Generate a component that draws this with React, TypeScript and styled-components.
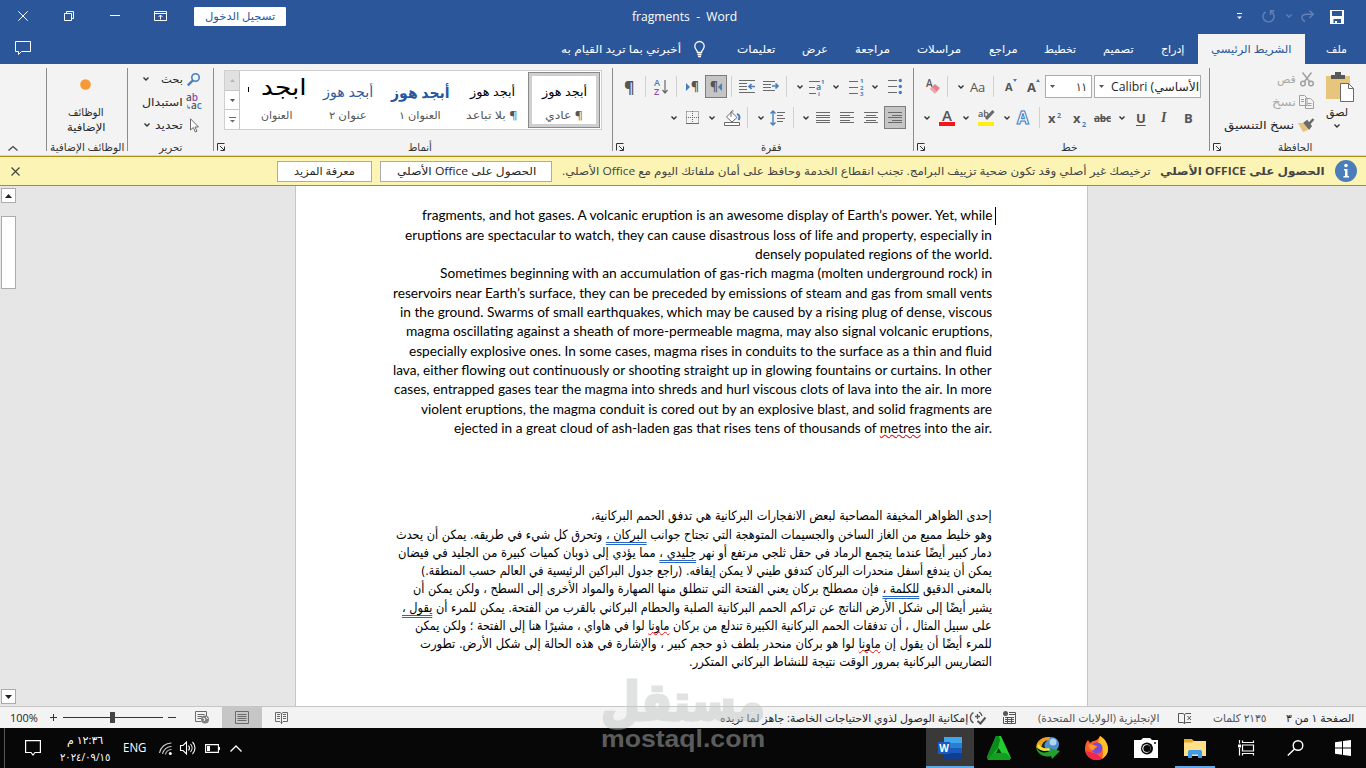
import {FC, ReactNode, useLayoutEffect, useRef, useState} from "react";
import styled, {createGlobalStyle, css} from "styled-components";

const UI = `"Open Sans", "DejaVu Sans", sans-serif`;
const BLUE = "#2b579a";
const GREY = "#6a6a6a";
const ACCENT = "#467ebd";

/* ---------- text that is squeezed to the width it gets ---------- */

interface ITxt {
    w: number;
    size?: number;
    color?: string;
    bold?: boolean;
    h?: number;
    ml?: number;
    mt?: number;
    font?: string;
    ltr?: boolean;
    children: ReactNode;
}

const Txt: FC<ITxt> = ({w, size = 11, color = "#262626", bold, h = 16, ml = 0, mt = 0, font = UI, ltr, children}) => {
    const ref = useRef<HTMLSpanElement>(null)
    const [scale, setScale] = useState(1)

    useLayoutEffect(() => {
        if (ref.current && ref.current.offsetWidth) setScale(w / ref.current.offsetWidth)
    }, [w])

    return (
        <TxtBox $w={w} $h={h} $ml={ml} $mt={mt}>
            <TxtInner ref={ref} dir={ltr ? "ltr" : "rtl"} $size={size} $color={color} $bold={bold} $font={font}
                      style={{transform: `scaleX(${scale})`}}>{children}</TxtInner>
        </TxtBox>
    )
}

const TxtBox = styled.div<{ $w: number; $h: number; $ml: number; $mt: number }>`
  display: flex;
  flex: none;
  width: ${({$w}) => $w}px;
  height: ${({$h}) => $h}px;
  line-height: ${({$h}) => $h}px;
  margin-left: ${({$ml}) => $ml}px;
  margin-top: ${({$mt}) => $mt}px;
`

const TxtInner = styled.span<{ $size: number; $color: string; $bold?: boolean; $font: string }>`
  flex: none;
  white-space: pre;
  transform-origin: left center;
  font-family: ${({$font}) => $font};
  font-size: ${({$size}) => $size}px;
  font-weight: ${({$bold}) => $bold ? 700 : 400};
  color: ${({$color}) => $color};
`

/* ---------- icons ---------- */

const Svg = styled.svg<{ $ml?: number; $mt?: number }>`
  flex: none;
  display: block;
  margin-left: ${({$ml = 0}) => $ml}px;
  margin-top: ${({$mt = 0}) => $mt}px;
  overflow: visible;
`

interface IIcon {
    w: number;
    h: number;
    ml?: number;
    mt?: number;
    color?: string;
    sw?: number;
    children: ReactNode;
}

const Icon: FC<IIcon> = ({w, h, ml, mt, color = GREY, sw = 1, children}) => (
    <Svg width={w} height={h} viewBox={`0 0 ${w} ${h}`} fill="none" stroke={color} strokeWidth={sw} $ml={ml}
         $mt={mt}>{children}</Svg>
)

const Chev: FC<{ ml?: number; mt?: number; color?: string }> = ({ml, mt, color = "#333"}) => (
    <Icon w={6} h={4} ml={ml} mt={mt} color={color} sw={1.4}><path d="M.5 .5L3 3L5.5 .5"/></Icon>
)

const Caret: FC<{ ml?: number; color?: string; up?: boolean }> = ({ml, color = "#555", up}) => (
    <Icon w={5} h={3} ml={ml} color="none"><path fill={color} d={up ? "M0 3L2.5 0L5 3Z" : "M0 0H5L2.5 3Z"}/></Icon>
)

const Launcher = () => (
    <Icon w={8} h={8} color="#333"><path d="M.5 7.5V.5H7.5M3 3L7 7M7.5 3.5V7.5H3.5"/></Icon>
)

const Lines: FC<{ rows: number[][]; ml?: number }> = ({rows, ml}) => (
    <Icon w={14} h={11} ml={ml}>
        {rows.map(([from, to], i) => <path key={i} d={`M${from} ${Math.round(i * 2.5) + .5}H${to}`}/>)}
    </Icon>
)

/* ---------- header ---------- */

const TitleBar = () => (
    <TitleRow>
        <Icon w={10} h={10} ml={18} color="#fff"><path d="M.3 .3L9.7 9.7M9.7 .3L.3 9.7"/></Icon>
        <Icon w={10} h={10} ml={36} color="#fff"><path d="M.5 2.5H7.5V9.5H.5ZM2.5 2.5V.5H9.5V7.5H7.5"/></Icon>
        <Icon w={10} h={2} ml={36} color="#fff"><path d="M0 .5H10"/></Icon>
        <Icon w={13} h={10} ml={34} color="#fff"><path d="M.5 .5H12.5V9.5H.5ZM.5 2.5H12.5M6.5 8.5V4M4.5 6L6.5 4L8.5 6"/></Icon>
        <SignIn><Txt w={70} color={BLUE} size={11}>تسجيل الدخول</Txt></SignIn>
        <Txt w={105} ml={346} mt={1} color="#fff" size={12} ltr>fragments  -  Word</Txt>
        <Icon w={5} h={7} ml={500} mt={1} color="#fff"><path d="M0 .5H5"/><path d="M0 3.5H5L2.5 6Z" fill="#fff" stroke="none"/></Icon>
        <Icon w={13} h={13} ml={20} color="#6282b4" sw={1.4}><path d="M3.500 1.800A5.500 5.500 0 1 0 9.500 1.800M12.500 .8H8.500V5"/></Icon>
        <Chev ml={11} color="#6282b4"/>
        <Icon w={13} h={12} ml={9} color="#6282b4" sw={1.4}><path d="M4 11.500C-1 9 .5 4.200 5.500 4.200H12M8.500 .5L12.300 4.200L8.500 8"/></Icon>
        <Icon w={14} h={14} ml={16} mt={2} color="none">
            <path d="M0 0H14V14H0Z" fill="#fff"/><path d="M2 1H12V6H2ZM3.500 9H11V13H7V11H5V13H3.500Z" fill={BLUE}/>
        </Icon>
    </TitleRow>
)

const TitleRow = styled.div`
  display: flex;
  align-items: center;
  height: 32px;
  padding-bottom: 2px;
`

const SignIn = styled.div`
  display: flex;
  flex: none;
  justify-content: center;
  align-items: center;
  width: 92px;
  height: 19px;
  margin-left: 27px;
  background: #fff;
  border-radius: 1px;
`

const tabs = [
    {t: "تعليمات", w: 38, ml: 32},
    {t: "عرض", w: 26, ml: 27},
    {t: "مراجعة", w: 35, ml: 27},
    {t: "مراسلات", w: 44, ml: 27},
    {t: "مراجع", w: 29, ml: 28},
    {t: "تخطيط", w: 32, ml: 26},
    {t: "تصميم", w: 31, ml: 27},
    {t: "إدراج", w: 23, ml: 27},
]

const TabBar = () => (
    <TabRow>
        <Icon w={16} h={14} ml={15} mt={-3} color="#fff"><path d="M.5 .5H15.5V10.500H6.500L3.500 13.500V10.500H.5Z"/></Icon>
        <Txt w={120} ml={530} color="#fff">أخبرني بما تريد القيام به</Txt>
        <Icon w={11} h={16} ml={13} color="#fff" sw={1.3}><path d="M3.500 11.500C3.500 9 .8 8.500 .8 5.200A4.700 4.700 0 0 1 10.200 5.200C10.200 8.500 7.500 9 7.500 11.500ZM3.500 13.500H7.500M4 15.500H7"/></Icon>
        {tabs.map(({t, w, ml}) => <Txt key={t} w={w} ml={ml} color="#fff">{t}</Txt>)}
        <ActiveTab><Txt w={81} color={BLUE}>الشريط الرئيسي</Txt></ActiveTab>
        <Txt w={21} ml={21} color="#fff">ملف</Txt>
    </TabRow>
)

const TabRow = styled.div`
  display: flex;
  align-items: center;
  height: 30px;
`

const ActiveTab = styled.div`
  display: flex;
  flex: none;
  align-items: center;
  justify-content: center;
  width: 107px;
  height: 30px;
  margin-left: 14px;
  background: #f3f3f3;
`

/* ---------- ribbon ---------- */

const Group: FC<{ w: number; label?: string; labelW?: number; labelX?: number; launcher?: boolean; children?: ReactNode }> =
    ({w, label, labelW = 0, labelX = 0, launcher, children}) => (
        <GroupBox $w={w}>
            <GroupBody>{children}</GroupBody>
            <GroupFoot>
                <FootCorner $w={launcher ? 8 : 0}>{launcher && <Launcher/>}</FootCorner>
                {label && <Txt w={labelW} ml={labelX - (launcher ? 8 : 0)} size={10.5} color="#333">{label}</Txt>}
            </GroupFoot>
        </GroupBox>
    )

const GroupBox = styled.div<{ $w: number }>`
  display: flex;
  flex-direction: column;
  flex: none;
  box-sizing: border-box;
  width: ${({$w}) => $w}px;
  height: 83px;
  border-right: 1px solid #8c8c8c;

  &:last-child {
    border-right: none;
  }
`

const GroupBody = styled.div`
  flex: none;
  height: 71px;
  margin-left: -1px;
`

const GroupFoot = styled.div`
  display: flex;
  flex: none;
  align-items: center;
  height: 16px;
  padding-left: 3px;
`

const FootCorner = styled.div<{ $w: number }>`
  width: ${({$w}) => $w}px;
`

const Row = styled.div<{ $h?: number; $mt?: number; $pl?: number }>`
  display: flex;
  align-items: center;
  height: ${({$h = 23}) => $h}px;
  margin-top: ${({$mt = 0}) => $mt}px;
  padding-left: ${({$pl = 0}) => $pl}px;
`

const Sep = styled.div<{ $ml: number }>`
  flex: none;
  width: 1px;
  height: 21px;
  margin-left: ${({$ml}) => $ml}px;
  background: #d0d0d0;
`

const Pressed = styled.div<{ $ml: number }>`
  display: flex;
  flex: none;
  box-sizing: border-box;
  align-items: center;
  justify-content: center;
  width: 22px;
  height: 23px;
  margin-left: ${({$ml}) => $ml}px;
  background: #c5c5c5;
  border: 1px solid #7d7d7d;
`

const Combo = styled.div<{ $w: number; $ml: number }>`
  display: flex;
  flex: none;
  align-items: center;
  box-sizing: border-box;
  overflow: hidden;
  width: ${({$w}) => $w}px;
  height: 23px;
  margin-left: ${({$ml}) => $ml}px;
  background: #fff;
  border: 1px solid #ababab;
`

const AddIns = () => (
    <Group w={81} label="الوظائف الإضافية" labelW={74} labelX={0}>
        <Row $mt={5} $pl={34}><Icon w={11} h={11} color="none"><circle cx="5.5" cy="5.5" r="5.3" fill="#f49b38"/></Icon></Row>
        <Row $h={15} $mt={8} $pl={22}><Txt w={36}>الوظائف</Txt></Row>
        <Row $h={15} $pl={21}><Txt w={39}>الإضافية</Txt></Row>
    </Group>
)

const Editing = () => (
    <Group w={86} label="تحرير" labelW={23} labelX={28}>
        <Row $h={22} $pl={16}>
            <Chev/>
            <Txt w={22} ml={12}>بحث</Txt>
            <Icon w={14} h={13} ml={4} color={ACCENT} sw={1.6}><circle cx="8.500" cy="4.500" r="3.700"/><path d="M5.800 7.500L.8 12.300" strokeWidth="2.400"/></Icon>
        </Row>
        <Row $h={24} $pl={15}>
            <Txt w={41}>استبدال</Txt>
            <Replace>
                <span>a<i>b</i></span>
                <span><b>↳</b>a<b>c</b></span>
            </Replace>
        </Row>
        <Row $h={22} $pl={17}>
            <Chev/>
            <Txt w={28} ml={5}>تحديد</Txt>
            <Icon w={9} h={15} ml={7}><path fill="#fff" d="M.5 .8V12L3.300 9.500L5.300 14L7 13.200L5 9H8.500Z"/></Icon>
        </Row>
    </Group>
)

const Replace = styled.div`
  display: flex;
  flex-direction: column;
  width: 18px;
  margin-left: 3px;
  font: 600 10px/8px ${UI};
  color: #555;

  i {
    font-style: normal;
    color: #8a4fb0;
  }

  b {
    font-weight: 600;
    color: ${ACCENT};
  }

  b:first-child {
    font-size: 6px;
  }
`

const gallery = [
    {t: "أبجد هوز", w: 50, label: "عنوان ٢", lw: 38, size: 14, color: "#2f5d9e"},
    {t: "أبجد هوز", w: 59, label: "العنوان ١", lw: 42, size: 15, color: "#2257a3", bold: true},
    {t: "أبجد هوز", w: 45, label: "¶ بلا تباعد", lw: 52, size: 12, color: "#000"},
]

const Styles = () => (
    <Group w={399} label="أنماط" labelW={24} labelX={191} launcher>
        <Gallery>
            <Spinner>
                <SpinCell $off><Caret up color="#b5b5b5"/></SpinCell>
                <SpinCell><Caret/></SpinCell>
                <SpinCell><Icon w={7} h={6}><path d="M0 .5H7"/><path d="M1 3H6L3.500 5.500Z" fill={GREY} stroke="none"/></Icon></SpinCell>
            </Spinner>
            <Style>
                <BigRow><Cut/><Txt w={46} h={30} mt={-5} size={23} color="#000" font={`"DejaVu Sans", sans-serif`}>ابجد</Txt></BigRow>
                <Txt w={31} mt={5} size={10.5} color="#555">العنوان</Txt>
            </Style>
            {gallery.map(({t, w, label, lw, size, color, bold}) => (
                <Style key={label}>
                    <Txt w={w} h={30} size={size} color={color} bold={bold}>{t}</Txt>
                    <Txt w={lw} size={10.5} color="#555">{label}</Txt>
                </Style>
            ))}
            <Style $on>
                <Txt w={45} h={30} size={12} color="#000">أبجد هوز</Txt>
                <Txt w={38} size={10.5} color="#555">¶ عادي</Txt>
            </Style>
        </Gallery>
    </Group>
)

const Gallery = styled.div`
  display: flex;
  box-sizing: border-box;
  width: 378px;
  height: 60px;
  margin: 2px 0 0 11px;
  border: 1px solid #cfcfcf;
  background: #fff;
`

const Spinner = styled.div`
  display: flex;
  flex-direction: column;
  flex: none;
  width: 14px;
  border-right: 1px solid #c6c6c6;
`

const SpinCell = styled.div<{ $off?: boolean }>`
  display: flex;
  flex: 1;
  align-items: center;
  justify-content: center;
  background: ${({$off}) => $off ? "#e1e1e1" : "#fff"};

  & + & {
    border-top: 1px solid #c6c6c6;
  }
`

const Style = styled.div<{ $on?: boolean }>`
  display: flex;
  flex-direction: column;
  flex: none;
  align-items: center;
  box-sizing: border-box;
  width: 72px;
  height: 58px;
  padding-top: 6px;
  ${({$on}) => $on && css`
    height: 56px;
    margin-top: 1px;
    padding-top: 1px;
    border: 1px solid #8a8a8a;
    box-shadow: inset 0 0 0 3px #cfcfcf;

    & > div:first-child {
      margin-top: 3px;
    }
  `}
`

const BigRow = styled.div`
  display: flex;
  align-items: center;
  height: 25px;
  padding-left: 2px;
`

const Cut = styled.div`
  width: 1px;
  height: 5px;
  margin-right: 12px;
  background: #000;
`

const AlignFull = [[0, 14], [0, 14], [0, 14], [0, 14], [0, 14]]
const AlignLeft = [[0, 14], [0, 10], [0, 14], [0, 10], [0, 14]]
const AlignCenter = [[0, 14], [2, 12], [0, 14], [2, 12], [0, 14]]
const AlignRight = [[0, 14], [4, 14], [0, 14], [4, 14], [0, 14]]

const Paragraph = () => (
    <Group w={301} label="فقرة" labelW={21} labelX={145} launcher>
        <Row $mt={7} $pl={12}>
            <Glyph $size={16} $w={11} $bold>¶</Glyph>
            <Sep $ml={10}/>
            <SortAZ><span>A</span><span>Z</span></SortAZ>
            <Icon w={6} h={14} ml={0} sw={1.2}><path d="M3 0V13M.5 10L3 13L5.500 10"/></Icon>
            <Sep $ml={8}/>
            <Icon w={5} h={8} ml={9} color="none"><path fill={ACCENT} d="M0 0L4 4L0 8Z"/></Icon>
            <Glyph $size={12} $w={8} $bold>¶</Glyph>
            <Pressed $ml={6}>
                <Glyph $size={12} $w={8} $bold>¶</Glyph>
                <Icon w={4} h={8} color="none"><path fill={ACCENT} d="M4 0L0 4L4 8Z"/></Icon>
            </Pressed>
            <Sep $ml={4}/>
            <Icon w={16} h={13} ml={7}>
                <path d="M0 .5H16M0 3.500H8M0 6.500H8M0 9.500H8M0 12.500H16"/><path stroke={ACCENT} strokeWidth="1.700" d="M16 6.500H10M12.500 4L10 6.500L12.500 9"/>
            </Icon>
            <Icon w={16} h={11} ml={8}>
                <path d="M0 .5H12M0 3.500H8M0 6.500H8M0 9.500H12"/><path stroke={ACCENT} strokeWidth="1.700" d="M9 5H15M12.500 2.500L15 5L12.500 7.500"/>
            </Icon>
            <Sep $ml={7}/>
            <Chev ml={10}/>
            <Icon w={16} h={16} ml={6}>
                <path d="M0 2.500H11M0 8.500H6M0 14.500H7"/>
                <g fill={ACCENT} stroke="none" fontFamily="Open Sans" fontWeight="700"><text x="12" y="5" fontSize="6">1</text><text x="7" y="11" fontSize="8.500">a</text><text x="9" y="17" fontSize="6">i</text></g>
            </Icon>
            <Chev ml={8}/>
            <Icon w={15} h={16} ml={10}>
                <path d="M0 2.500H9M0 8.500H9M0 14.500H9"/>
                <g fill={ACCENT} stroke="none" fontFamily="Open Sans" fontWeight="700" fontSize="6"><text x="11" y="4">1</text><text x="11" y="10.500">2</text><text x="11" y="17">3</text></g>
            </Icon>
            <Chev ml={8}/>
            <Icon w={14} h={15} ml={10}>
                <path d="M0 1.500H9M0 7.500H9M0 13.500H9"/>
                <g fill={ACCENT} stroke="none"><circle cx="12.300" cy="1.500" r="1.700"/><circle cx="12.300" cy="7.500" r="1.700"/><circle cx="12.300" cy="13.500" r="1.700"/></g>
            </Icon>
        </Row>
        <Row $mt={8} $pl={59}>
            <Chev/>
            <Icon w={13} h={13} ml={9}><path strokeDasharray="1 1" d="M.5 .5H12.500V12M.5 .5V12M6.500 0V12M0 6.500H13"/><path d="M0 12.500H13"/></Icon>
            <Chev ml={10}/>
            <Icon w={16} h={16} ml={9}>
                <path d="M7.500 2L13 7.500L8 12L2.500 7Z" fill="#fff"/><path d="M7 7V2A1.800 1.800 0 0 1 9.500 1"/><path d="M13 4C16 5 16 8 14.500 10" stroke={ACCENT} strokeWidth="2"/>
                <path d="M.5 12.500H15.500V15.500H.5Z" fill="#fff"/>
            </Icon>
            <Sep $ml={7}/>
            <Chev ml={10}/>
            <Icon w={15} h={16} ml={6}>
                <path d="M7 2.500H15M7 5.500H13M7 8.500H15M7 11.500H13"/><path stroke={ACCENT} strokeWidth="1.400" d="M3 1V15M.5 3.500L3 1L5.500 3.500M.5 12.500L3 15L5.500 12.500"/>
            </Icon>
            <Sep $ml={8}/>
            <Chev ml={9}/>
            <Lines ml={7} rows={AlignFull}/>
            <Lines ml={10} rows={AlignLeft}/>
            <Lines ml={10} rows={AlignCenter}/>
            <Pressed $ml={6}><Lines rows={AlignRight}/></Pressed>
        </Row>
    </Group>
)

const Glyph = styled.span<{ $size: number; $w: number; $ml?: number; $bold?: boolean; $deco?: string }>`
  flex: none;
  width: ${({$w}) => $w}px;
  margin-left: ${({$ml = 0}) => $ml}px;
  font: ${({$bold}) => $bold ? 700 : 400} ${({$size}) => $size}px/20px ${UI};
  letter-spacing: -.2px;
  text-decoration: ${({$deco = "none"}) => $deco};
  text-underline-offset: 2px;
  color: #555;
  white-space: nowrap;

  sup, sub {
    font-size: 7px;
    line-height: 0;
    color: ${ACCENT};
  }
`

const SortAZ = styled.div`
  display: flex;
  flex-direction: column;
  width: 8px;
  margin-left: 8px;
  font: 600 9px/9px ${UI};
  color: ${ACCENT};

  span + span {
    color: #8a4fb0;
  }
`

const Mark = styled.div<{ $ml: number; $bar: string }>`
  display: flex;
  flex: none;
  justify-content: center;
  align-items: flex-end;
  box-sizing: border-box;
  width: 16px;
  height: 17px;
  margin-left: ${({$ml}) => $ml}px;
  border-bottom: 4px solid ${({$bar}) => $bar};
  font: 600 15px/14px ${UI};
  color: #555;
`

const Outline = styled.span`
  width: 13px;
  margin-left: 7px;
  font: 700 17px/20px ${UI};
  color: #fff;
  -webkit-text-stroke: 1px ${ACCENT};
  text-shadow: 0 0 2px #9cc0e6;
`

const Font = () => (
    <Group w={296} label="خط" labelW={16} labelX={144} launcher>
        <Row $mt={7} $pl={13}>
            <Icon w={14} h={15} ml={0}>
                <text x="0" y="8" fontSize="10" fontWeight="600" fontFamily="Open Sans" fill="#555" stroke="none">A</text>
                <path d="M4 10L9 5L14 9L9 14.500Z" fill="#e8808a" stroke="none"/><path d="M4 10L6 8L11 12.500L9 14.500Z" fill="#f0a5ab" stroke="none"/>
            </Icon>
            <Sep $ml={7}/>
            <Chev ml={10}/>
            <Glyph $size={13} $w={15} $ml={6}>Aa</Glyph>
            <Sep $ml={8}/>
            <Glyph $size={11} $w={8} $ml={11} $bold>A</Glyph>
            <Icon w={4} h={3} mt={-12} color="none"><path fill={ACCENT} d="M0 0H4L2 3Z"/></Icon>
            <Glyph $size={13} $w={9} $ml={10} $bold>A</Glyph>
            <Icon w={4} h={3} mt={-12} color="none"><path fill={ACCENT} d="M0 3H4L2 0Z"/></Icon>
            <Combo $w={47} $ml={5}><Caret ml={4}/><Txt w={11} ml={21} size={12}>١١</Txt></Combo>
            <Combo $w={107} $ml={2}><Caret ml={4}/><Txt w={88} ml={7} size={12} ltr>Calibri (الأساسي</Txt></Combo>
        </Row>
        <Row $mt={8} $pl={11}>
            <Chev/>
            <Mark $ml={9} $bar="#f5141e">A</Mark>
            <Chev ml={8}/>
            <Icon w={16} h={17} ml={9}>
                <text x="0" y="8" fontSize="9" fontWeight="600" fontFamily="Open Sans" fill="#555" stroke="none">ab</text>
                <path d="M15.500 2L8 10" strokeWidth="3"/><path d="M0 15H16" stroke="#ffee10" strokeWidth="4"/>
            </Icon>
            <Chev ml={10}/>
            <Outline>A</Outline>
            <Sep $ml={9}/>
            <Glyph $size={13} $w={14} $ml={8} $bold>x<sup> 2</sup></Glyph>
            <Glyph $size={13} $w={14} $ml={11} $bold>x<sub> 2</sub></Glyph>
            <Glyph $size={10} $w={17} $ml={7} $bold $deco="line-through">abc</Glyph>
            <Chev ml={8}/>
            <Glyph $size={13} $w={11} $ml={11} $bold $deco="underline">U</Glyph>
            <ItalicGlyph>I</ItalicGlyph>
            <Glyph $size={13} $w={9} $ml={15} $bold>B</Glyph>
        </Row>
    </Group>
)

const ItalicGlyph = styled.span`
  width: 8px;
  margin-left: 14px;
  font: italic 700 14px/20px "Liberation Serif", serif;
  color: #555;
`

const Clipboard = () => (
    <Group w={157} label="الحافظة" labelW={34} labelX={65} launcher>
        <ClipCols>
            <ClipSmall>
                <Row $h={22}><Txt w={19} color="#a8a8a8">قص</Txt>
                    <Icon w={14} h={15} ml={4} color="#a0a0a0" sw={1.5}><circle cx="3" cy="11.500" r="2.300"/><circle cx="11" cy="11.500" r="2.300"/><path d="M2.500 .5L9.500 9.500M11.500 .5L4.500 9.500"/></Icon></Row>
                <Row $h={24}><Txt w={24} color="#a8a8a8">نسخ</Txt>
                    <Icon w={15} h={14} ml={3} color="#a0a0a0"><path d="M.5 .5H5.500L8 3V10.500H.5ZM6.500 3.500H11.500L14.500 6.500V13.500H6.500ZM2 4.500H5M2 6.500H5M8.500 8.500H12.500M8.500 10.500H12.500"/></Icon></Row>
                <Row $h={22}><Txt w={70}>نسخ التنسيق</Txt>
                    <Icon w={16} h={15} ml={4}><path d="M0 5L5 14L10 12L7 5Z" fill="#e8c37b" stroke="none"/><path d="M7 5L11 10L12.500 8L9 3.500ZM11 6L15.500 1" fill="#666" strokeWidth="2.500"/></Icon></Row>
            </ClipSmall>
            <ClipBig>
                <Icon w={28} h={30} color="none">
                    <path d="M0 4H24V27H0Z" fill="#e8c57c"/><path d="M5 3H9V0H15V3H19V7H5Z" fill="#595959"/>
                    <path d="M14.500 11.500H22.500L27.500 16.500V29.500H14.500Z" fill="#fff" stroke="#6a6a6a"/><path d="M22.500 11.500V16.500H27.500" stroke="#6a6a6a"/>
                </Icon>
                <Txt w={22} ml={0} mt={2}>لصق</Txt>
                <Chev ml={8} mt={4}/>
            </ClipBig>
        </ClipCols>
    </Group>
)

const ClipCols = styled.div`
  display: flex;
`

const ClipSmall = styled.div`
  display: flex;
  flex-direction: column;
  align-items: flex-end;
  width: 105px;
`

const ClipBig = styled.div`
  display: flex;
  flex-direction: column;
  padding: 4px 0 0 12px;
`

const Ribbon = () => (
    <RibbonBar>
        <Collapse><Icon w={10} h={5} color="#444" sw={1.3}><path d="M.5 4.500L5 .5L9.500 4.500"/></Icon></Collapse>
        <AddIns/>
        <Editing/>
        <Styles/>
        <Paragraph/>
        <Font/>
        <Clipboard/>
    </RibbonBar>
)

const RibbonBar = styled.div`
  display: flex;
  box-sizing: border-box;
  height: 92px;
  padding-top: 4px;
  background: #f3f3f3;
  border-bottom: 1px solid #d4d4d4;
`

const Collapse = styled.div`
  display: flex;
  flex: none;
  align-items: flex-end;
  box-sizing: border-box;
  width: 47px;
  height: 83px;
  padding-left: 8px;
  border-right: 1px solid #8c8c8c;
`

/* ---------- licence message ---------- */

const Message = () => (
    <MessageBar>
        <Icon w={9} h={9} ml={11} color="#444" sw={1.2}><path d="M.5 .5L8.500 8.500M8.500 .5L.5 8.500"/></Icon>
        <MsgButton $w={95} $ml={257}><Txt w={61}>معرفة المزيد</Txt></MsgButton>
        <MsgButton $w={172} $ml={8}><Txt w={139}>الحصول على Office الأصلي</Txt></MsgButton>
        <Txt w={589} ml={10} color="#444">ترخيصك غير أصلي وقد تكون ضحية تزييف البرامج. تجنب انقطاع الخدمة وحافظ على أمان ملفاتك اليوم مع Office الأصلي.</Txt>
        <Txt w={165} ml={9} bold color="#444">الحصول على OFFICE الأصلي</Txt>
        <Icon w={22} h={22} ml={10} color="none">
            <circle cx="11" cy="11" r="11" fill="#4a7ebb"/><circle cx="11" cy="5.500" r="1.800" fill="#fff"/><path d="M9 9H12.500V16H14V17.500H8.500V16H10V10.500H9Z" fill="#fff"/>
        </Icon>
    </MessageBar>
)

const MessageBar = styled.div`
  display: flex;
  align-items: center;
  box-sizing: border-box;
  height: 30px;
  background: #fcf4b4;
  border: solid #b08f18;
  border-width: 1px 0;
`

const MsgButton = styled.div<{ $w: number; $ml: number }>`
  display: flex;
  flex: none;
  align-items: center;
  justify-content: center;
  box-sizing: border-box;
  width: ${({$w}) => $w}px;
  height: 21px;
  margin-left: ${({$ml}) => $ml}px;
  background: #fff;
  border: 1px solid #ababab;
`

/* ---------- document ---------- */

const Err = styled.span`
  text-decoration: underline wavy #e8101c 1.2px;
  text-decoration-skip-ink: none;
  text-underline-offset: 1px;
`

const Gram = styled.span`
  text-decoration: underline double #2a66c8 1px;
  text-decoration-skip-ink: none;
  text-underline-offset: 3px;
`

const english: { w: number; t: ReactNode }[] = [
    {w: 570, t: "fragments, and hot gases. A volcanic eruption is an awesome display of Earth’s power. Yet, while"},
    {w: 587, t: "eruptions are spectacular to watch, they can cause disastrous loss of life and property, especially in"},
    {w: 237, t: "densely populated regions of the world."},
    {w: 552, t: "Sometimes beginning with an accumulation of gas-rich magma (molten underground rock) in"},
    {w: 599, t: "reservoirs near Earth’s surface, they can be preceded by emissions of steam and gas from small vents"},
    {w: 592, t: "in the ground. Swarms of small earthquakes, which may be caused by a rising plug of dense, viscous"},
    {w: 586, t: "magma oscillating against a sheath of more-permeable magma, may also signal volcanic eruptions,"},
    {w: 583, t: "especially explosive ones. In some cases, magma rises in conduits to the surface as a thin and fluid"},
    {w: 599, t: "lava, either flowing out continuously or shooting straight up in glowing fountains or curtains. In other"},
    {w: 598, t: "cases, entrapped gases tear the magma into shreds and hurl viscous clots of lava into the air. In more"},
    {w: 571, t: "violent eruptions, the magma conduit is cored out by an explosive blast, and solid fragments are"},
    {w: 538, t: <>ejected in a great cloud of ash-laden gas that rises tens of thousands of <Err>metres</Err> into the air.</>},
]

const arabic: { w: number; t: ReactNode }[] = [
    {w: 401, t: "إحدى الظواهر المخيفة المصاحبة لبعض الانفجارات البركانية هي تدفق الحمم البركانية،"},
    {w: 596, t: <>وهو خليط مميع من الغاز الساخن والجسيمات المتوهجة التي تجتاح جوانب <Gram>البركان ،</Gram> وتحرق كل شيء في طريقه. يمكن أن يحدث</>},
    {w: 594, t: <>دمار كبير أيضًا عندما يتجمع الرماد في حقل ثلجي مرتفع أو نهر <Gram>جليدي ،</Gram> مما يؤدي إلى ذوبان كميات كبيرة من الجليد في فيضان</>},
    {w: 571, t: "يمكن أن يندفع أسفل منحدرات البركان كتدفق طيني لا يمكن إيقافه. (راجع جدول البراكين الرئيسية في العالم حسب المنطقة.)"},
    {w: 579, t: <>بالمعنى الدقيق <Gram>للكلمة ،</Gram> فإن مصطلح بركان يعني الفتحة التي تنطلق منها الصهارة والمواد الأخرى إلى السطح ، ولكن يمكن أن</>},
    {w: 590, t: <>يشير أيضًا إلى شكل الأرض الناتج عن تراكم الحمم البركانية الصلبة والحطام البركاني بالقرب من الفتحة. يمكن للمرء أن <Gram>يقول ،</Gram></>},
    {w: 577, t: <>على سبيل المثال ، أن تدفقات الحمم البركانية الكبيرة تندلع من بركان <Err>ماونا</Err> لوا في هاواي ، مشيرًا هنا إلى الفتحة ؛ ولكن يمكن</>},
    {w: 572, t: <>للمرء أيضًا أن يقول إن <Err>ماونا</Err> لوا هو بركان منحدر بلطف ذو حجم كبير ، والإشارة في هذه الحالة إلى شكل الأرض. تطورت</>},
    {w: 303, t: "التضاريس البركانية بمرور الوقت نتيجة للنشاط البركاني المتكرر."},
]

const Document = () => (
    <Workspace>
        <ScrollBar>
            <ScrollButton><Icon w={7} h={4} color="none"><path fill="#222" d="M0 4L3.500 0L7 4Z"/></Icon></ScrollButton>
            <Thumb/>
            <ScrollButton><Icon w={7} h={4} color="none"><path fill="#222" d="M0 0H7L3.500 4Z"/></Icon></ScrollButton>
        </ScrollBar>
        <Page>
            <FirstLine>
                <Txt w={570} h={19.35} size={13.5} color="#000" font={`Lato, sans-serif`} ltr>{english[0].t}</Txt>
                <Cursor/>
            </FirstLine>
            {english.slice(1).map(({w, t}, i) => (
                <Txt key={i} w={w} h={19.35} size={13.5} color="#000" font={`Lato, sans-serif`} ltr>{t}</Txt>
            ))}
            <Gap/>
            {arabic.map(({w, t}, i) => (
                <Txt key={i} w={w} h={18.25} size={12.8} color="#000" font={`"DejaVu Sans", sans-serif`}>{t}</Txt>
            ))}
        </Page>
    </Workspace>
)

const Workspace = styled.div`
  display: flex;
  height: 520px;
  background: #e6e6e6;
`

const ScrollBar = styled.div`
  display: flex;
  flex-direction: column;
  flex: none;
  width: 16px;
  height: 518px;
  padding-top: 2px;
  padding-left: 1px;
  box-sizing: border-box;
`

const ScrollButton = styled.div`
  display: flex;
  align-items: center;
  justify-content: center;
  box-sizing: border-box;
  width: 15px;
  height: 15px;
  border: 1px solid #ababab;
  background: #fff;

  &:last-child {
    margin-top: auto;
  }
`

const Thumb = styled.div`
  box-sizing: border-box;
  width: 15px;
  height: 73px;
  margin-top: 13px;
  background: #fff;
  border: 1px solid #ababab;
`

const Page = styled.div`
  display: flex;
  flex-direction: column;
  align-items: flex-end;
  box-sizing: border-box;
  width: 793px;
  margin-left: 279px;
  padding: 20.35px 95px 0 0;
  overflow: hidden;
  background: #fff;
  border: solid #c6c6c6;
  border-width: 0 1px;
`

const FirstLine = styled.div`
  display: flex;
  align-items: center;
  margin-right: -4px;
`

const Cursor = styled.div`
  width: 1px;
  height: 18px;
  margin-left: 3px;
  background: #000;
`

const Gap = styled.div`
  flex: none;
  height: 69px;
`

/* ---------- status bar ---------- */

const Status = () => (
    <StatusBar>
        <Txt w={28} ml={10} size={11} ltr>100%</Txt>
        <Icon w={7} h={7} ml={12} color="#333"><path d="M0 3.500H7M3.500 0V7"/></Icon>
        <Icon w={100} h={11} ml={6} color="#333"><path d="M0 5.500H100"/><path d="M47 0H52V11H47Z" fill="#444" stroke="none"/></Icon>
        <Icon w={8} h={1} ml={5} color="#333"><path d="M0 .5H8"/></Icon>
        <Icon w={14} h={13} ml={19}><path d="M6 10.500H.5V.5H11.500V5M2.500 3.500H9.500M2.500 5.500H7M2.500 7.500H6"/><circle cx="10" cy="8.500" r="4" fill="#808080" stroke="none"/><path d="M8 7L10 8L9 10M11 6L12.500 8" stroke="#fff"/></Icon>
        <ViewOn><Icon w={14} h={13}><path d="M.5 .5H13.500V12.500H.5ZM2.500 3.500H11.500M2.500 5.500H11.500M2.500 7.500H11.500M2.500 9.500H11.500"/></Icon></ViewOn>
        <Icon w={13} h={13} ml={13}><path d="M.5 1.500H5L6.500 2.500L8 1.500H12.500V10.500H8L6.500 12L5 10.500H.5ZM6.500 2V13M2 3.500H5M2 5.500H5M2 7.500H5M8 3.500H11M8 5.500H11M8 7.500H11"/></Icon>
        <Txt w={248} ml={432} size={11}>إمكانية الوصول لذوي الاحتياجات الخاصة: جاهز لما تريده</Txt>
        <Icon w={16} h={14} ml={2} color="#555" sw={1.3}><path d="M3.500 1.500A6 6 0 0 0 3.500 12M9 1A6 6 0 0 1 12 5M5 5.500H10M7.500 3V8"/><path d="M7.500 10L10.500 12.500L15.500 6.500" strokeWidth="2"/></Icon>
        <Icon w={13} h={13} ml={17} color="#555"><circle cx="2.500" cy="2.500" r="2.500" fill="#555" stroke="none"/><path d="M6 1.500H12.500V12.500H.5V6M6 3.500H12M2 6.500H11M2 8.500H11M2 10.500H11M4.500 6V12M8.500 6V12"/></Icon>
        <Txt w={122} ml={22} size={11} color="#555">الإنجليزية (الولايات المتحدة)</Txt>
        <Icon w={14} h={12} ml={18} color="#555"><path d="M5 1.500H.5V10.500H5L6.500 11.500V2.500ZM6.500 2.500L8 1.500H13M6.500 11.500L8 10.500H13M9.500 4L13 8M13 4L9.500 8"/></Icon>
        <Txt w={53} ml={21} size={11} color="#555">٢١٣٥ كلمات</Txt>
        <Txt w={68} ml={20} size={11}>الصفحة ١ من ٣</Txt>
    </StatusBar>
)

const StatusBar = styled.div`
  display: flex;
  align-items: center;
  box-sizing: border-box;
  height: 22px;
  background: #f3f3f3;
  border-top: 1px solid #c6c6c6;
`

const ViewOn = styled.div`
  display: flex;
  flex: none;
  align-items: center;
  justify-content: center;
  width: 40px;
  height: 21px;
  margin-left: 13px;
  background: #c6c6c6;
`

/* ---------- taskbar ---------- */

const apps: { w?: number; on?: boolean; line?: boolean; icon: ReactNode }[] = [
    {
        on: true, line: true, w: 48, icon: <Icon w={24} h={22} color="none">
            <path d="M6 0H24V6H6Z" fill="#41a5ee"/><path d="M6 6H24V11H6Z" fill="#2b7cd3"/><path d="M6 11H24V16H6Z" fill="#185abd"/><path d="M6 16H24V22H6Z" fill="#103f91"/>
            <path d="M0 5H12V17H0Z" fill="#185abd"/><text x="1.200" y="14.500" fontSize="10" fontWeight="700" fontFamily="Open Sans" fill="#fff">W</text>
        </Icon>
    },
    {
        w: 49, icon: <Icon w={24} h={24} color="none">
            <path d="M9 0H14L24 22L22 24H1L0 21Z" fill="#22cc2f"/><path d="M9 0L0 21L1 24L11 12L13 4L12 0Z" fill="#0c8a1b"/><path d="M1 24H22L24 22L19 17L7 17Z" fill="#12a01f"/><path d="M11.500 12L9 17H14.500Z" fill="#063f0b"/>
        </Icon>
    },
    {
        w: 49, icon: <Icon w={24} h={22} color="none">
            <circle cx="15.500" cy="7.500" r="7.500" fill="#4c8fd0"/><circle cx="17" cy="5" r="3.500" fill="#b5d4ee"/><path d="M14 0C5 -1 -1 6 .5 11L5 13C5 8 8 4 13 3Z" fill="#efa11e"/><path d="M12 3C7 4 5 8 6 13L9 13C7 9 9 5 12 3Z" fill="#1c2b16"/>
            <path d="M0 10C4 17 10 16 15 14L14 11L24 14L16 22L15 19C8 21 1 17 0 10Z" fill="#23a12b"/><path d="M1 9C3 14 9 15 14 13L13 11C9 12 5 11 3 7Z" fill="#f2e13c"/>
        </Icon>
    },
    {
        w: 49, icon: <Icon w={24} h={24} color="none">
            <path d="M3 4L5 7L8 5C10 5 14 3 15 0C20 3 23 8 23 13A11.500 11 0 0 1 0 13C0 9 1 6 3 4Z" fill="#ff5a2a"/>
            <path d="M15 0C20 3 23 8 23 13C23 18 20 21 17 23C19 17 18 10 13 6Z" fill="#ffc327"/><path d="M1 15A11 10 0 0 0 17 23L12 18Z" fill="#f0274e"/>
            <circle cx="12" cy="12" r="5.500" fill="#7b4bd6"/><path d="M3 9C7 7 9 10 12 10C12 12 9 12 9 14C7 15 4 13 3 9Z" fill="#ff9526"/>
        </Icon>
    },
    {
        w: 49, icon: <Icon w={24} h={20} color="none">
            <path d="M0 2H7L9 0H16L18 2H24V20H0Z" fill="#fff"/><circle cx="13" cy="10.500" r="6" fill="#070707"/><circle cx="12.500" cy="10.500" r="4.200" fill="#fff"/><circle cx="13" cy="10.500" r="3.600" fill="#070707"/><circle cx="21" cy="5" r="1" fill="#070707"/>
        </Icon>
    },
    {
        line: true, w: 50, icon: <Icon w={22} h={19} color="none">
            <path d="M0 1H8L10 2H22V17H0Z" fill="#ffdf87"/><path d="M0 0H8L9.500 2L8 3.500H0Z" fill="#e9a72b"/><path d="M4 19V13C4 11.500 5 11 6 11H16C17 11 18 11.500 18 13V19H14V15.500H8V19Z" fill="#3f9be8"/>
        </Icon>
    },
    {
        w: 51, icon: <Icon w={16} h={16} color="#fff" sw={1.2}><path d="M4.500 .5V2.500H15.500V.5M4.500 5H15.500V11H4.500ZM4.500 15.500V13.500H15.500V15.500M1.500 0V3.500M1.500 8V15.500"/><path d="M0 4.500H3V7.500H0Z" fill="#fff" stroke="none"/></Icon>
    },
    {
        w: 48, icon: <Icon w={17} h={16} color="#fff" sw={1.4}><circle cx="11" cy="5.500" r="4.800"/><path d="M7.500 9L.8 15.500"/></Icon>
    },
    {
        w: 48, icon: <Icon w={16} h={16} color="none"><path fill="#fff" d="M0 2.300L7 1.300V7.500H0ZM8 1.100L16 0V7.500H8ZM0 8.500H7V14.700L0 13.700ZM8 8.500H16V16L8 14.900Z"/></Icon>
    },
]

const Taskbar = () => (
    <TaskRow>
        <Edge/>
        <Icon w={16} h={16} ml={20} color="#fff" sw={1.2}><path d="M.6 .6H15.400V12.500H10L8 15L6 12.500H.6Z"/></Icon>
        <Clock>
            <Txt w={36} size={11} color="#fff" h={17}>١٢:٣٦ م</Txt>
            <Txt w={50} size={11} color="#fff" h={17}>٢٠٢٤/٠٩/١٥</Txt>
        </Clock>
        <Txt w={23} ml={13} size={12} color="#fff" ltr>ENG</Txt>
        <Icon w={13} h={13} ml={13} color="#ccc" sw={1.1}><path d="M.5 11A12 12 0 0 1 12.500 1M3.500 12A9 9 0 0 1 12.500 4.500M6.500 12.500A6 6 0 0 1 12.500 7.500"/><circle cx="11.300" cy="11.500" r="1.500" fill="#fff" stroke="none"/></Icon>
        <Icon w={16} h={14} ml={8} color="#fff" sw={1.1}><path d="M.5 4.500H3L6.500 1V13L3 9.500H.5ZM8.500 4.500A4 4 0 0 1 8.500 9.500M10.500 3A6 6 0 0 1 10.500 11M12.500 1A8.500 8.500 0 0 1 12.500 13"/></Icon>
        <Icon w={15} h={9} ml={9} color="#fff" sw={1.1}><path d="M.6 .6H13.400V8.400H.6ZM14.500 3V6"/><path d="M2 2H5V7H2Z" fill="#fff" stroke="none"/></Icon>
        <Icon w={12} h={7} ml={10} color="#fff" sw={1.3}><path d="M.5 6.500L6 1L11.500 6.500"/></Icon>
        <Apps>
            {apps.map(({w = 48, on, line, icon}, i) => <TaskItem key={i} $w={w} $on={on} $line={line}>{icon}</TaskItem>)}
        </Apps>
    </TaskRow>
)

const TaskRow = styled.div`
  display: flex;
  align-items: center;
  height: 40px;
  background: #070707;
`

const Edge = styled.div`
  flex: none;
  width: 1px;
  height: 40px;
  margin-left: 4px;
  background: #555;
`

const Clock = styled.div`
  display: flex;
  flex-direction: column;
  flex: none;
  align-items: center;
  width: 50px;
  margin-left: 19px;
`

const Apps = styled.div`
  display: flex;
  margin-left: 684px;
`

const TaskItem = styled.div<{ $w: number; $on?: boolean; $line?: boolean }>`
  display: flex;
  flex: none;
  align-items: center;
  justify-content: center;
  box-sizing: border-box;
  width: ${({$w}) => $w}px;
  height: 40px;
  background: ${({$on}) => $on ? "#393939" : "transparent"};
  ${({$line, $on}) => $line && css`
    background-image: linear-gradient(#5fa8ea, #5fa8ea);
    background-repeat: no-repeat;
    background-position: center bottom;
    background-size: ${$on ? 48 : 40}px 2px;
  `}
`

const Watermark = styled.div`
  position: absolute;
  left: 601px;
  top: 674px;
  opacity: .5;
  pointer-events: none;

  & > div:first-child span {
    -webkit-text-stroke: 3px #c4c8c8;
    paint-order: stroke fill;
  }
`

const Global = createGlobalStyle`
  body {
    margin: 0;
    overflow: hidden;
  }
`

const Window = styled.div`
  position: relative;
  width: 1366px;
  height: 768px;
  overflow: hidden;
`

const Header = styled.div`
  height: 64px;
  background: ${BLUE};
`

export default function App() {
    return (
        <Window>
            <Global/>
            <Header>
                <TitleBar/>
                <TabBar/>
            </Header>
            <Ribbon/>
            <Message/>
            <Document/>
            <Status/>
            <Taskbar/>
            <Watermark>
                <Txt w={164} h={57} size={52} bold color="#c4c8c8" font={`"DejaVu Sans", sans-serif`}>مستقل</Txt>
                <Txt w={164} h={28} mt={-6} size={24} bold color="#b0b0b0" font={`"Liberation Sans", sans-serif`} ltr>mostaql.com</Txt>
            </Watermark>
        </Window>
    )
}
